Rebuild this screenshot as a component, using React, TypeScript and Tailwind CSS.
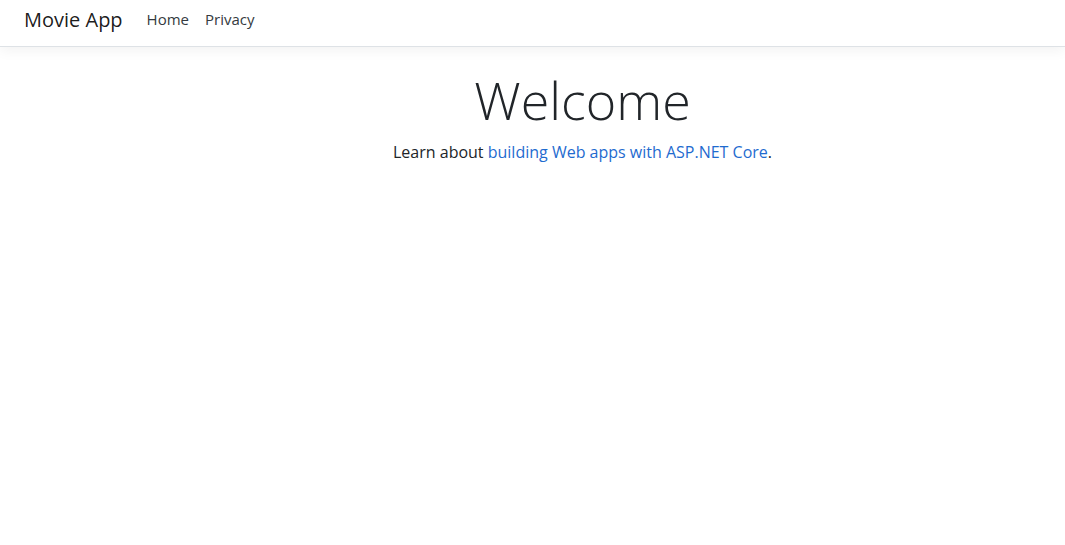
export default function App() {
  return (
    <div className="min-h-[545px] bg-white text-[#212529] font-['Open_Sans','Noto_Sans',sans-serif]">
      {/* Navbar */}
      <header>
        <nav className="h-[47px] border-b border-[#dee2e6] bg-white shadow-[0_4px_12px_rgba(0,0,0,0.05)]">
          <div className="flex h-full items-center px-6 pb-2">
            <a href="#" className="mr-4 text-[20px] leading-none text-[rgba(0,0,0,0.9)] pt-px">
              Movie App
            </a>
            <ul className="flex items-center">
              <li>
                <a href="#" className="px-2 text-[15px] text-[#343a40]">Home</a>
              </li>
              <li>
                <a href="#" className="px-2 text-[15px] text-[#343a40]">Privacy</a>
              </li>
            </ul>
          </div>
        </nav>
      </header>

      {/* Main */}
      <main className="mt-[22px] flex flex-col items-center pl-[100px] text-center">
        <h1 className="text-[52px] font-light leading-[1.2] text-[#212529]">Welcome</h1>
        <p className="mt-[9px] text-[16px] text-[#212529]">
          Learn about{" "}
          <a href="#" className="text-[#1f6bcf]">building Web apps with ASP.NET Core</a>.
        </p>
      </main>
    </div>
  );
}
